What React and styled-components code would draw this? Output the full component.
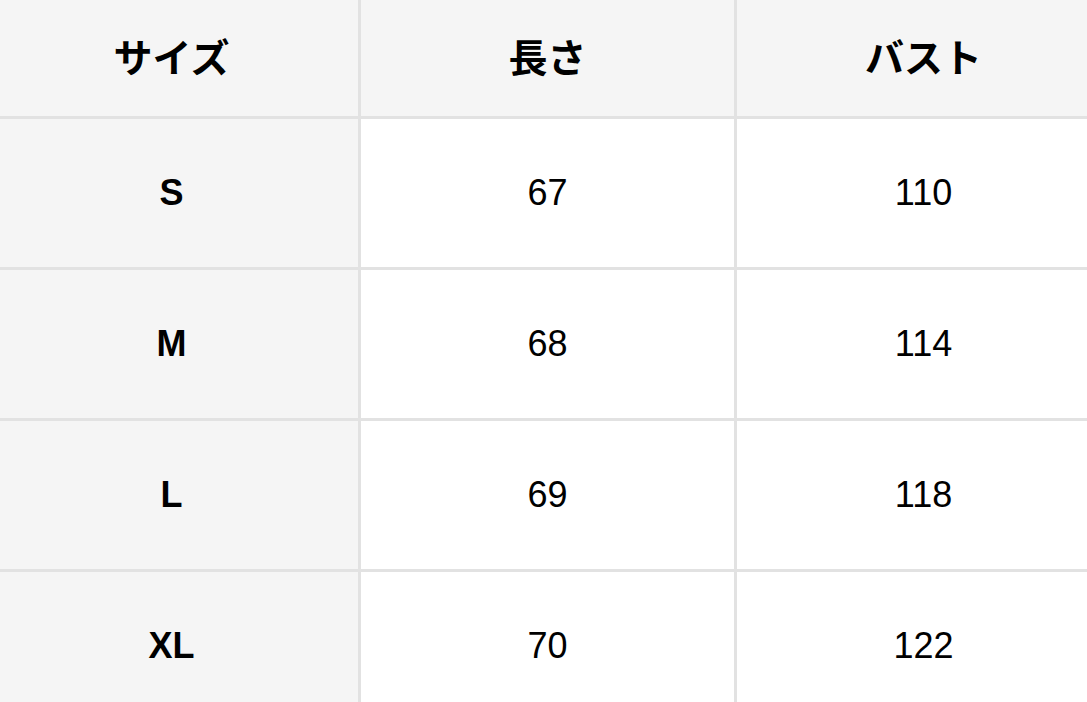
import React from 'react';
import styled, { createGlobalStyle } from 'styled-components';

const GlobalStyle = createGlobalStyle`
  html, body {
    margin: 0;
    padding: 0;
    background: #ffffff;
  }
  body {
    font-family: "Liberation Sans", "Noto Sans CJK JP", Arial, sans-serif;
    color: #000;
  }
`;

const Frame = styled.div`
  width: 1087px;
  height: 702px;
  overflow: hidden;
  background: #fff;
`;

const Table = styled.table`
  margin-left: -18px;
  border-collapse: collapse;
  table-layout: fixed;
  width: 1126px;
`;

const Cell = styled.td`
  width: 373px;
  height: ${(p) => (p.$head ? '110px' : '148px')};
  padding: ${(p) => (p.$head ? '0 0 6px' : '0')};
  text-align: center;
  vertical-align: middle;
  border: 3px solid #e2e2e2;
  border-top: ${(p) => (p.$head ? 'none' : '3px solid #e2e2e2')};
  background: ${(p) => (p.$shade ? '#f5f5f5' : '#ffffff')};
  font-family: ${(p) =>
    p.$head ? '"Noto Sans CJK JP", sans-serif' : '"Liberation Sans", Arial, sans-serif'};
  font-size: ${(p) => (p.$head ? '39px' : '36px')};
  font-weight: ${(p) => (p.$bold ? 700 : 400)};
  line-height: 1;
`;

const headers = ['サイズ', '長さ', 'バスト'];

const rows = [
  ['S', '67', '110'],
  ['M', '68', '114'],
  ['L', '69', '118'],
  ['XL', '70', '122'],
];

export default function App() {
  return (
    <Frame>
      <GlobalStyle />
      <Table>
        <tbody>
          <tr>
            {headers.map((h) => (
              <Cell key={h} as="th" $head $shade $bold>
                {h}
              </Cell>
            ))}
          </tr>
          {rows.map((r) => (
            <tr key={r[0]}>
              {r.map((v, i) => (
                <Cell key={i} $shade={i === 0} $bold={i === 0}>
                  {v}
                </Cell>
              ))}
            </tr>
          ))}
        </tbody>
      </Table>
    </Frame>
  );
}
